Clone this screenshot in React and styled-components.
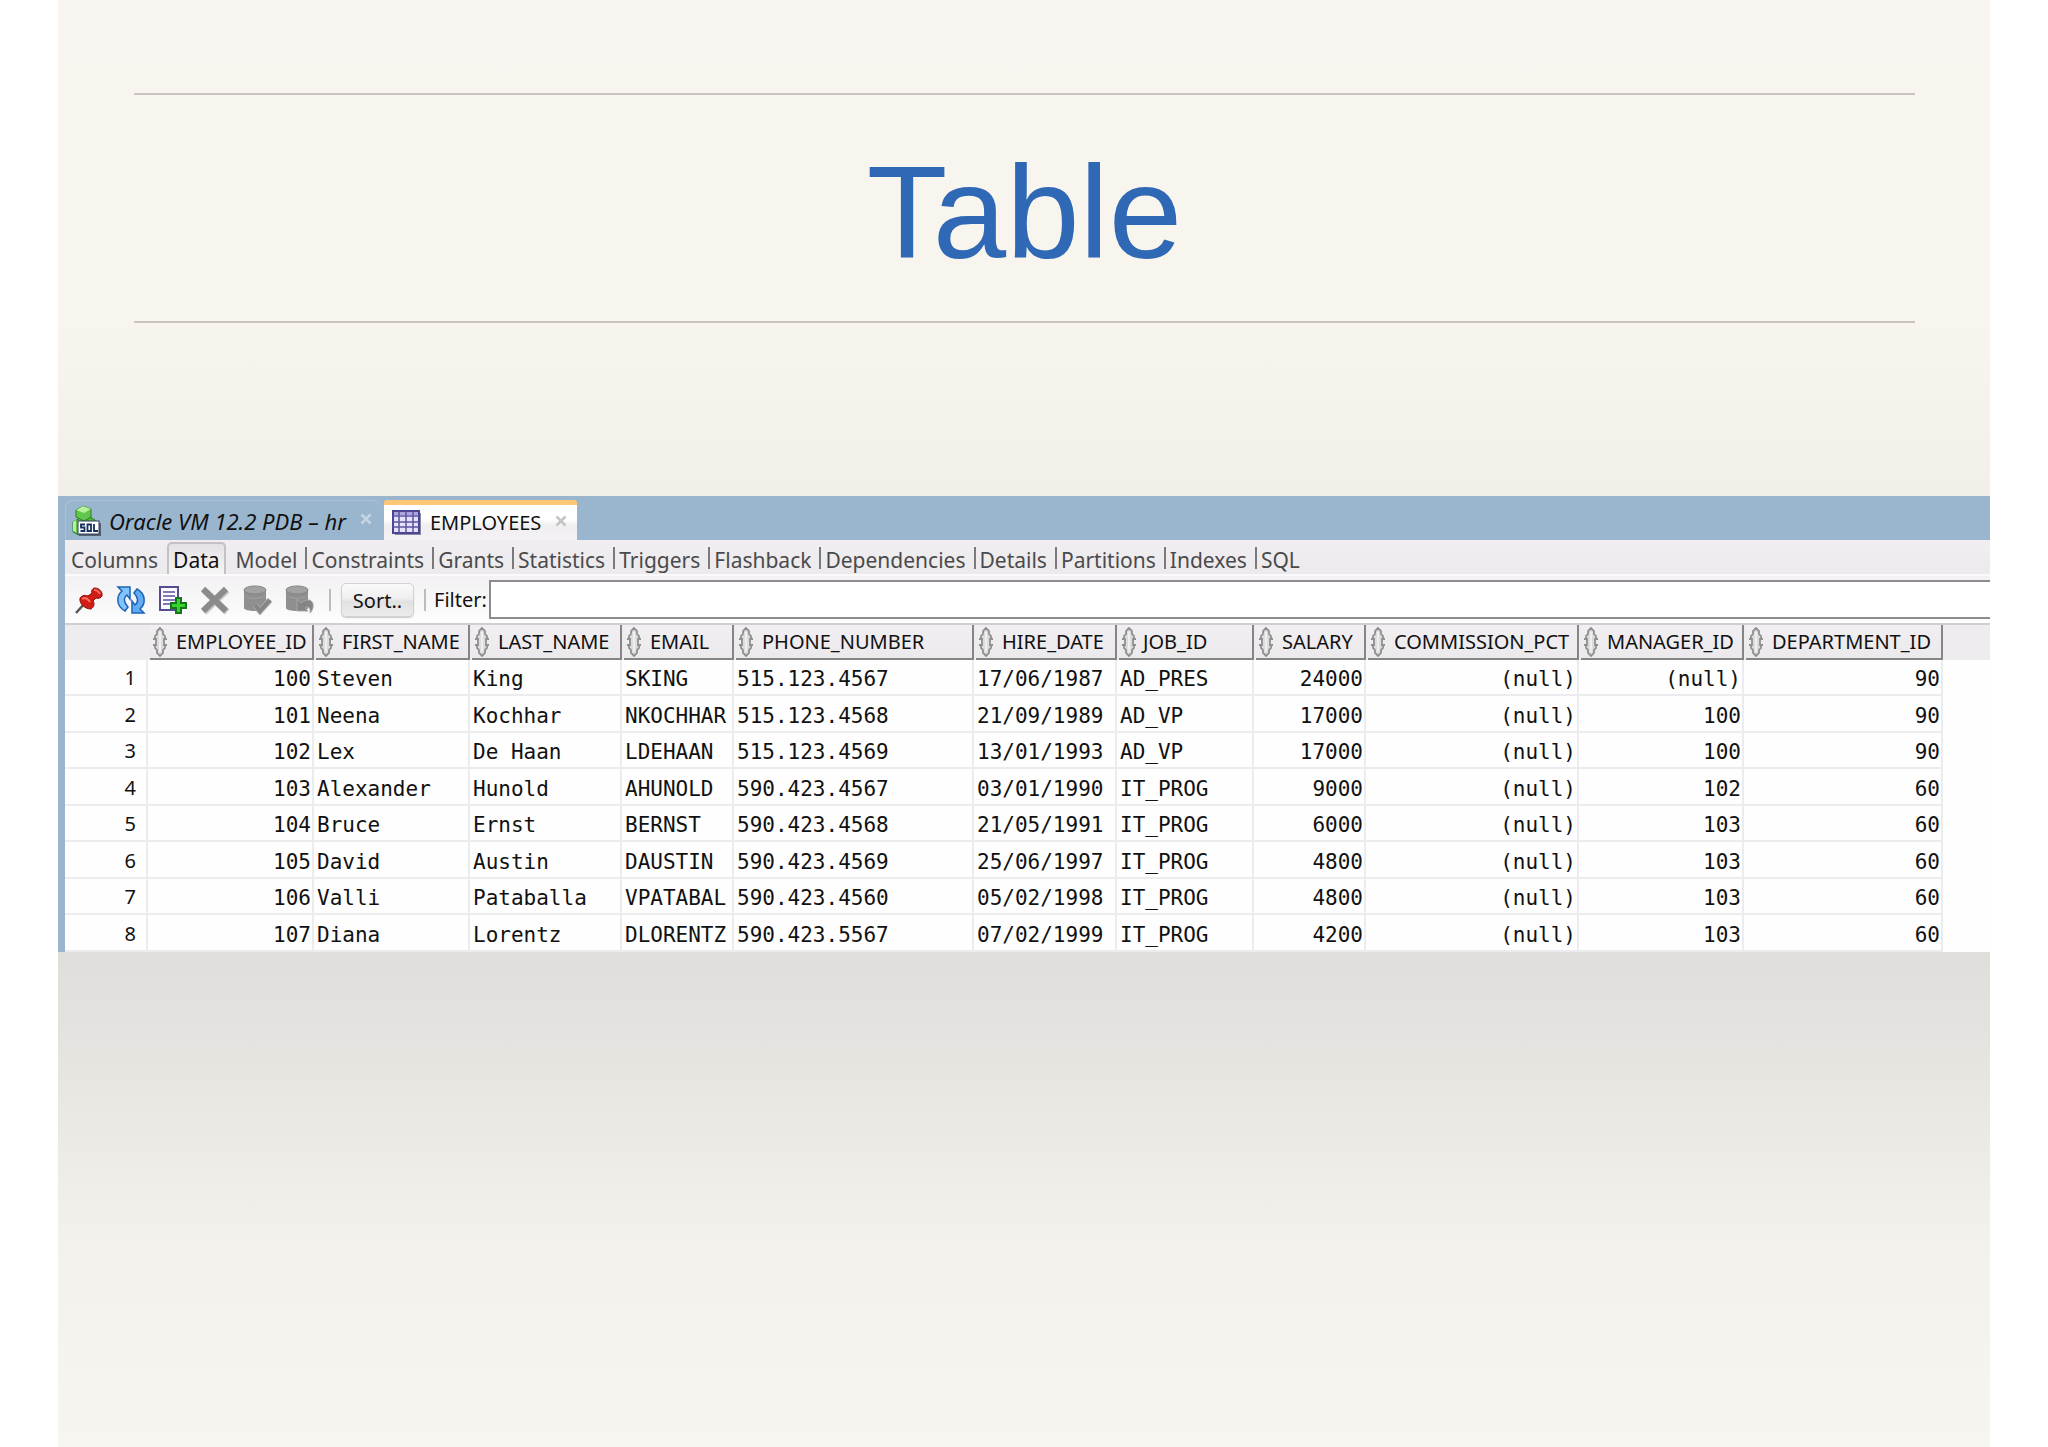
import React, { useState } from "react";
import styled, { createGlobalStyle } from "styled-components";

const GlobalStyle = createGlobalStyle`
  * {
    box-sizing: border-box;
  }
  body {
    margin: 0;
    background: #ffffff;
  }
  button, input {
    font: inherit;
    color: inherit;
  }
`;

const Slide = styled.main`
  min-height: 100vh;
  margin: 0 58px;
  padding-top: 93px;
  background: linear-gradient(
    #f8f4ef 0,
    #f8f4ee 320px,
    #f2eee8 500px,
    #dfdeda 950px,
    #e4e3df 1040px,
    #f2f1eb 1240px,
    #f6f5f0 1447px
  );
`;
const TitleBlock = styled.header`
  margin: 0 75px 173px 76px;
  border-top: 2px solid #c9c4bf;
  border-bottom: 2px solid #c9c4bf;
`;
const Title = styled.h1`
  margin: 0;
  padding-top: 10px;
  color: #2f68b4;
  font: 400 132px/216px "Liberation Sans", Arial, sans-serif;
  text-align: center;
`;

const Window = styled.section`
  padding-left: 7px;
  background: #9ab6ce;
  color: #111111;
  font: 400 20px/28px "Noto Sans", sans-serif;
`;
const FileTabs = styled.div`
  height: 44px;
  padding-top: 4px;
  display: flex;
  gap: 4px;
`;
const FileTab = styled.div`
  padding: ${(props) => (props.$active ? "0 10px 0 8px" : "0 8px 0 5px")};
  display: flex;
  align-items: center;
  gap: 14px;

  border-top: ${(props) => (props.$active ? "5px solid #fdc777" : "1px solid #a9c1d6")};
  border-left: ${(props) => (props.$active ? "0" : "1px solid #a9c1d6")};
  border-radius: ${(props) => (props.$active ? "3px 3px 0 0" : "8px 8px 0 0")};
  background: ${(props) =>
    props.$active ? "linear-gradient(#ffffff 40%, #f0eef0 60%, #f4f2f4)" : "transparent"};
  font-size: ${(props) => (props.$active ? "20px" : "22px")};
  font-style: ${(props) => (props.$active ? "normal" : "italic")};
`;
const PlainButton = styled.button`
  padding: 0;
  border: 0;
  background: none;
  display: flex;
  align-items: center;
  gap: 8px;
  white-space: nowrap;
`;
const CloseButton = styled(PlainButton)`
  padding-bottom: 4px;
  color: ${(props) => (props.$active ? "#c4c4c6" : "#c5d5e3")};
`;

const SubTabs = styled.nav`
  height: 36px;
  padding: 2px 0 0 2px;
  display: flex;

  background: linear-gradient(#f0eef0, #eceaec);
  border-bottom: 2px solid #fbfafb;
  color: #4a4a4c;
  font-size: 21px;
`;
const SubTab = styled.button`
  padding: 4px 4px 0;
  border: 0;
  background: none;
  display: flex;
  align-items: center;
  white-space: nowrap;

  ${(props) =>
    props.$active &&
    `
    margin: 0 6px 0 5px;
    padding-top: 2px;
    border: 2px solid #c3c1c3;
    border-bottom: 0;
    border-radius: 5px 5px 0 0;
    background: linear-gradient(#e4e2e4, #f6f5f6);
    color: #111111;
  `}
`;
const Divider = styled.span`
  width: 2px;
  height: 22px;
  margin: ${(props) => props.$margin};
  background: ${(props) => props.$color};
`;

const Toolbar = styled.div`
  height: 47px;
  padding-left: 9px;
  display: flex;
  align-items: center;
  gap: 12px;
  background: linear-gradient(#f3f1f3, #fdfdfd);
`;
const IconButton = styled(PlainButton)`
  height: 30px;
`;
const SortButton = styled.button`
  width: 73px;
  height: 34px;
  padding: 2px 0 0;
  border: 1px solid #d2d0d2;
  border-radius: 5px;
  background: linear-gradient(#fafafa 0%, #f0eff0 45%, #e2e1e2 55%, #ececec);
  box-shadow: 0 1px 1px #c9c9c9;
`;
const FilterLabel = styled.label`
  flex: 1;
  display: flex;
  align-items: center;
  gap: 2px;
`;
const FilterInput = styled.input`
  flex: 1;
  height: 39px;
  border: 2px solid #8d8b8e;
  border-right: 0;
  border-radius: 0;
  background: #ffffff;
  outline: 0;
`;

const Grid = styled.table`
  width: 100%;
  table-layout: fixed;
  border-collapse: separate;
  border-spacing: 0;
  background: #fefefe;
`;
const HeadCell = styled.th`
  height: 37px;
  padding: 0 0 0 2px;
  background: #eeecee;
  border-top: 2px solid #d0ced0;
  font-weight: 400;
`;
const HeadButton = styled(PlainButton)`
  width: 100%;
  height: 35px;
  padding-left: 2px;
  gap: ${(props) => (props.$tight ? "6px" : "8px")};
  border-right: 2px solid #868487;
  border-bottom: 2px solid #868487;
  background: linear-gradient(#f1eff1, #ebe9eb);
`;
const Row = styled.tr`
  height: 36px;
  &:nth-child(even) {
    height: 37px;
  }
`;
const Cell = styled.td`
  padding: 4px 1px 0 3px;
  border-right: 2px solid #ecebee;
  border-bottom: 2px solid #ecebee;
  font: 400 21px/28px "DejaVu Sans Mono", monospace;
  text-align: ${(props) => (props.$right ? "right" : "left")};
  white-space: nowrap;
`;
const RowNumber = styled.th`
  padding: 2px 10px 0 0;
  border-right: 2px solid #ecebee;
  border-bottom: 2px solid #ecebee;
  font-weight: 400;
  text-align: right;
`;
const Filler = styled.td`
  background: #fefefe;
`;

const SqlIcon = () => (
  <svg width="30" height="32" viewBox="0 0 30 32" aria-hidden="true">
    <path d="M2 17l7-4 6 3v11l-7 3-6-3z" fill="#5fc445" stroke="#2d7d25" />
    <path d="M13 14l6-2 5 3v5h-11z" fill="#4db53a" stroke="#2d7d25" />
    <path d="M5 5l7-4 8 3v8l-7 4-8-4z" fill="#63c64c" stroke="#2d7d25" />
    <path d="M5 5l7-4 8 3-7 4z" fill="#b5f09b" />
    <path d="M2 17l3-2v12l-3-1z" fill="#b5f09b" />
    <rect x="8" y="18" width="22" height="13" fill="#555f70" />
    <rect x="7" y="16" width="21" height="13" fill="#ffffff" stroke="#33415a" />
    <path
      d="M14 19.500h-4v3h3.500v3.500h-4M16.500 19.500h3.500v6.500h-3.500zM23 19v7h4"
      fill="none"
      stroke="#16305c"
      strokeWidth="1.800"
    />
  </svg>
);

const TableIcon = () => (
  <svg width="30" height="26" viewBox="0 0 30 26" aria-hidden="true">
    <path d="M3 3h26v22H3z" fill="#8d8aa5" />
    <path d="M1 1h26v22H1z" fill="#e4e2fa" stroke="#4b4494" strokeWidth="2" />
    <path d="M2 3.500h24" stroke="#aaa5dc" strokeWidth="3" />
    <path d="M7 1v22M14 1v22M21 1v22M1 6h26M1 12h26M1 17h26" stroke="#5b54a0" strokeWidth="1.500" />
  </svg>
);

const CloseIcon = () => (
  <svg width="12" height="12" viewBox="0 0 12 12" aria-hidden="true">
    <path d="M1.500 1.500l9 9M10.500 1.500l-9 9" stroke="currentColor" strokeWidth="2.500" />
  </svg>
);

const PinIcon = () => (
  <svg width="30" height="30" viewBox="0 0 30 30" aria-hidden="true">
    <path d="M2 28l9-10" stroke="#555" strokeWidth="2.500" />
    <path
      d="M6 13c2-3 6-3 8-2l4-3c-1-3 1-5 3-5 4 0 8 4 7 8-1 2-4 3-6 2l-3 3c2 3 1 6-2 8C11 24 5 19 6 13z"
      fill="#cf1d17"
      stroke="#8d100c"
    />
    <path d="M8 14c3-2 6 0 8 3M20 5c3 0 5 2 6 4" fill="none" stroke="#ff6b5c" strokeWidth="2" />
  </svg>
);

const RefreshIcon = () => (
  <svg width="30" height="30" viewBox="0 0 30 30" aria-hidden="true">
    <path
      d="M2 2h12v12l-3-4c-4 3-3 8 1 12l-3 4C0 21 0 11 6 6z"
      fill="#82c4fa"
      stroke="#1d63b5"
      strokeWidth="1.500"
    />
    <path
      d="M28 28H16V16l3 4c4-3 3-8-1-12l3-4c9 5 9 15 3 20z"
      fill="#62acf4"
      stroke="#1d63b5"
      strokeWidth="1.500"
    />
  </svg>
);

const InsertIcon = () => (
  <svg width="30" height="30" viewBox="0 0 30 30" aria-hidden="true">
    <path d="M2 2h18v23H2z" fill="#fafaff" stroke="#554d91" strokeWidth="2" />
    <path d="M5 7h12M5 11h12M5 15h12M5 19h7" stroke="#8079b5" strokeWidth="1.800" />
    <path
      d="M18 13h5v5h5v5h-5v5h-5v-5h-5v-5h5z"
      fill="#35d52b"
      stroke="#13761a"
      strokeWidth="2"
    />
  </svg>
);

const DeleteIcon = () => (
  <svg width="30" height="30" viewBox="0 0 30 30" aria-hidden="true">
    <path d="M4 5l23 22M27 5L4 27" stroke="#c9c9c9" strokeWidth="7" />
    <path d="M3 4l23 22M26 4L3 26" stroke="#8b8b8b" strokeWidth="6" />
  </svg>
);

const Database = () => (
  <>
    <path d="M2 5v18c0 4 22 4 22 0V5z" fill="#8f8f8f" />
    <ellipse cx="13" cy="5" rx="11" ry="4" fill="#a2a2a2" stroke="#858585" />
    <path d="M3 11c3 3 17 3 20 0" fill="none" stroke="#a0a0a0" />
  </>
);

const CommitIcon = () => (
  <svg width="30" height="30" viewBox="0 0 30 30" aria-hidden="true">
    <Database />
    <path d="M13 20l5 6 10-11" fill="none" stroke="#a9a9a9" strokeWidth="6" />
    <path d="M13 20l5 6 10-11" fill="none" stroke="#858585" strokeWidth="4" />
  </svg>
);

const RollbackIcon = () => (
  <svg width="30" height="30" viewBox="0 0 30 30" aria-hidden="true">
    <Database />
    <path d="M13 14v12h11l-3-3c3-3 6 0 5 5 5-5 4-13-2-13-3 0-5 1-7 3z" fill="#858585" stroke="#a4a4a4" />
  </svg>
);

const SortIcon = () => (
  <svg width="16" height="30" viewBox="0 0 16 30" aria-hidden="true">
    <path
      d="M8 1L5 4v3L3 9v3H1h3v6H1h2v3l2 2v3l3 3 3-3v-3l2-2v-3h2-3v-6h3-2V9l-2-2V4z"
      fill="#dcdcdc"
      stroke="#909090"
      strokeWidth="1.800"
    />
    <path d="M8 5v20" stroke="#efefef" strokeWidth="2" />
  </svg>
);

const subTabs = [
  "Columns",
  "Data",
  "Model",
  "Constraints",
  "Grants",
  "Statistics",
  "Triggers",
  "Flashback",
  "Dependencies",
  "Details",
  "Partitions",
  "Indexes",
  "SQL",
];

const tools = [
  { label: "Freeze view", Icon: PinIcon },
  { label: "Refresh", Icon: RefreshIcon },
  { label: "Insert row", Icon: InsertIcon },
  { label: "Delete row", Icon: DeleteIcon },
  { label: "Commit", Icon: CommitIcon },
  { label: "Rollback", Icon: RollbackIcon },
];

const columns = [
  { name: "EMPLOYEE_ID", width: 166, right: true },
  { name: "FIRST_NAME", width: 156 },
  { name: "LAST_NAME", width: 152 },
  { name: "EMAIL", width: 112 },
  { name: "PHONE_NUMBER", width: 240 },
  { name: "HIRE_DATE", width: 143 },
  { name: "JOB_ID", width: 137, tight: true },
  { name: "SALARY", width: 112, right: true },
  { name: "COMMISSION_PCT", width: 213, right: true },
  { name: "MANAGER_ID", width: 165, right: true },
  { name: "DEPARTMENT_ID", width: 199, right: true },
];

const employees = [
  ["100", "Steven", "King", "SKING", "515.123.4567", "17/06/1987", "AD_PRES", "24000", "(null)", "(null)", "90"],
  ["101", "Neena", "Kochhar", "NKOCHHAR", "515.123.4568", "21/09/1989", "AD_VP", "17000", "(null)", "100", "90"],
  ["102", "Lex", "De Haan", "LDEHAAN", "515.123.4569", "13/01/1993", "AD_VP", "17000", "(null)", "100", "90"],
  ["103", "Alexander", "Hunold", "AHUNOLD", "590.423.4567", "03/01/1990", "IT_PROG", "9000", "(null)", "102", "60"],
  ["104", "Bruce", "Ernst", "BERNST", "590.423.4568", "21/05/1991", "IT_PROG", "6000", "(null)", "103", "60"],
  ["105", "David", "Austin", "DAUSTIN", "590.423.4569", "25/06/1997", "IT_PROG", "4800", "(null)", "103", "60"],
  ["106", "Valli", "Pataballa", "VPATABAL", "590.423.4560", "05/02/1998", "IT_PROG", "4800", "(null)", "103", "60"],
  ["107", "Diana", "Lorentz", "DLORENTZ", "590.423.5567", "07/02/1999", "IT_PROG", "4200", "(null)", "103", "60"],
];

const Col = styled.col`
  width: ${(props) => props.$width}px;
`;

const EmployeeGrid = () => (
  <Grid>
    <colgroup>
      <Col $width={83} />
      {columns.map((column) => (
        <Col key={column.name} $width={column.width} />
      ))}
      <col />
    </colgroup>
    <thead>
      <tr>
        <HeadCell />
        {columns.map((column) => (
          <HeadCell key={column.name} scope="col">
            <HeadButton $tight={column.tight}>
              <SortIcon />
              {column.name}
            </HeadButton>
          </HeadCell>
        ))}
        <HeadCell />
      </tr>
    </thead>
    <tbody>
      {employees.map((row, i) => (
        <Row key={row[0]}>
          <RowNumber scope="row">{i + 1}</RowNumber>
          {row.map((value, j) => (
            <Cell key={columns[j].name} $right={columns[j].right}>
              {value}
            </Cell>
          ))}
          <Filler />
        </Row>
      ))}
    </tbody>
  </Grid>
);

const App = () => {
  const [active, setActive] = useState("Data");
  const [filter, setFilter] = useState("");

  return (
    <>
      <GlobalStyle />
      <Slide>
        <TitleBlock>
          <Title>Table</Title>
        </TitleBlock>
        <Window>
          <FileTabs>
            <FileTab>
              <PlainButton>
                <SqlIcon />
                Oracle VM 12.2 PDB – hr
              </PlainButton>
              <CloseButton aria-label="Close connection">
                <CloseIcon />
              </CloseButton>
            </FileTab>
            <FileTab $active>
              <PlainButton>
                <TableIcon />
                EMPLOYEES
              </PlainButton>
              <CloseButton $active aria-label="Close EMPLOYEES">
                <CloseIcon />
              </CloseButton>
            </FileTab>
          </FileTabs>
          <SubTabs>
            {subTabs.map((name, i) => (
              <React.Fragment key={name}>
                {i > 2 && <Divider $margin="5px 0 0 4px" $color="#7b797c" />}
                <SubTab $active={name === active} onClick={() => setActive(name)}>
                  {name}
                </SubTab>
              </React.Fragment>
            ))}
          </SubTabs>
          <Toolbar>
            {tools.map(({ label, Icon }) => (
              <IconButton key={label} aria-label={label}>
                <Icon />
              </IconButton>
            ))}
            <Divider $margin="0 -2px 0 3px" $color="#bdbbbe" />
            <SortButton>Sort..</SortButton>
            <Divider $margin="0 -4px 0 -2px" $color="#bdbbbe" />
            <FilterLabel>
              Filter:
              <FilterInput value={filter} onChange={(e) => setFilter(e.target.value)} />
            </FilterLabel>
          </Toolbar>
          <EmployeeGrid />
        </Window>
      </Slide>
    </>
  );
};

export default App;
